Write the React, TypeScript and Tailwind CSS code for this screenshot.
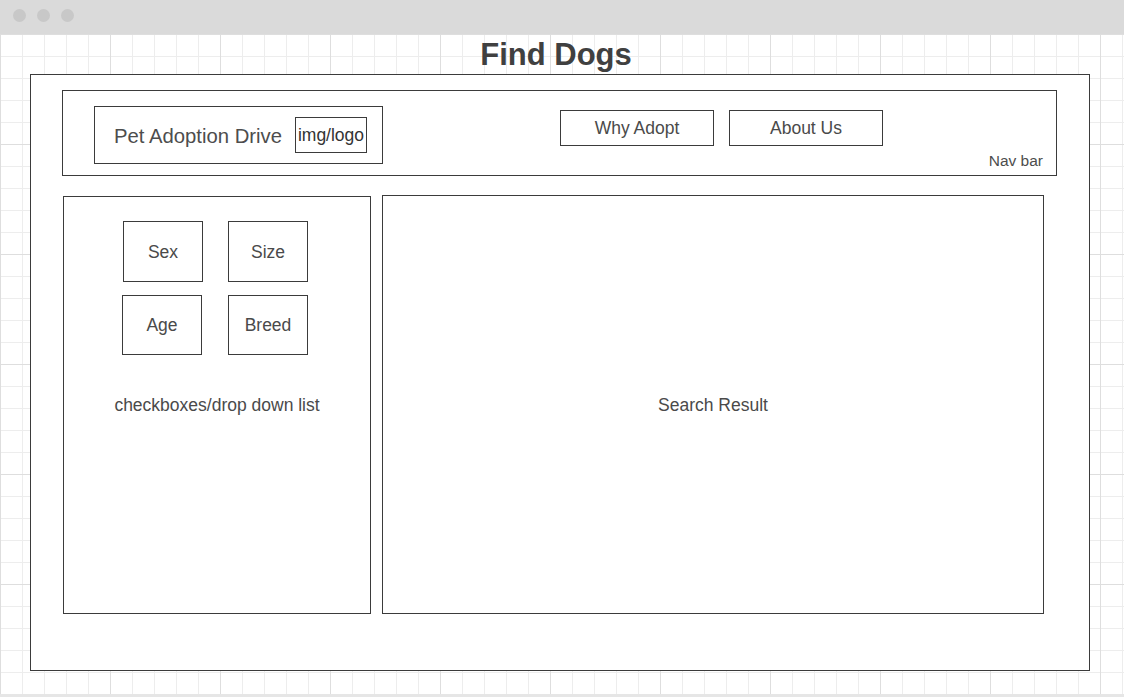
import React from "react";

const box = "border border-[#3b3b3b] bg-white";

function FilterBox({ label, w, h }: { label: string; w: string; h: string }) {
  return (
    <div className={`${box} ${w} ${h} flex items-center justify-center pt-[1px] text-[17.5px] text-[#4a4a4a]`}>
      {label}
    </div>
  );
}

export default function App() {
  return (
    <div
      className="w-[1124px] h-[697px] flex flex-col overflow-hidden bg-white"
      style={{ fontFamily: '"Liberation Sans", Arial, sans-serif' }}
    >
      {/* window title bar */}
      <div className="h-[34px] shrink-0 bg-[#dadada] flex items-start gap-[11px] pl-[13px] pt-[9px]">
        <div className="w-[13px] h-[13px] rounded-full bg-[#c8c8c8]" />
        <div className="w-[13px] h-[13px] rounded-full bg-[#c8c8c8]" />
        <div className="w-[13px] h-[13px] rounded-full bg-[#c8c8c8]" />
      </div>

      {/* grid canvas */}
      <div className="h-[660px] shrink-0 flex flex-col [background-image:linear-gradient(to_right,#dedede_1px,transparent_1px),linear-gradient(to_bottom,#dedede_1px,transparent_1px),linear-gradient(to_right,#ededed_1px,transparent_1px),linear-gradient(to_bottom,#ededed_1px,transparent_1px)] [background-size:110px_110px,110px_110px,22px_22px,22px_22px]">
        <div className="h-[40px] w-[1124px] pr-[12px] pt-[1px] flex items-center justify-center">
          <h1 className="text-[31px] leading-[40px] font-bold text-[#404040]">Find Dogs</h1>
        </div>

        <div className={`${box} ml-[30px] w-[1060px] h-[597px] flex flex-col`}>
          {/* nav bar */}
          <div className={`${box} ml-[31px] mt-[15px] w-[995px] h-[86px] flex items-start`}>
            <div className={`${box} ml-[31px] mt-[15px] w-[289px] h-[58px] flex items-center pl-[19px]`}>
              <span className="text-[20.3px] leading-[23px] pt-[2px] text-[#4d4d4d]">Pet Adoption Drive</span>
              <div className={`${box} ml-auto mr-[15px] w-[72px] h-[36px] flex items-center justify-center text-[17.5px] text-[#333333]`}>
                img/logo
              </div>
            </div>
            <div className="ml-[177px] mt-[19px] flex gap-[15px]">
              <div className={`${box} w-[154px] h-[36px] flex items-center justify-center pt-[1px] text-[17.5px] text-[#4a4a4a]`}>
                Why Adopt
              </div>
              <div className={`${box} w-[154px] h-[36px] flex items-center justify-center pt-[1px] text-[17.5px] text-[#4a4a4a]`}>
                About Us
              </div>
            </div>
            <span className="ml-auto self-end mb-[6px] mr-[13px] text-[15.5px] leading-[17px] text-[#4d4d4d]">Nav bar</span>
          </div>

          {/* panels */}
          <div className="mt-[19px] flex items-end">
            <div className={`${box} ml-[32px] w-[308px] h-[418px] flex flex-col`}>
              <div className="mt-[24px] ml-[58px] flex flex-col gap-[13px]">
                <div className="flex gap-[25px] pl-[1px]">
                  <FilterBox label="Sex" w="w-[80px]" h="h-[61px]" />
                  <FilterBox label="Size" w="w-[80px]" h="h-[61px]" />
                </div>
                <div className="flex gap-[26px]">
                  <FilterBox label="Age" w="w-[80px]" h="h-[60px]" />
                  <FilterBox label="Breed" w="w-[80px]" h="h-[60px]" />
                </div>
              </div>
              <div className="mt-[40px] text-center text-[17.5px] leading-[20px] text-[#4a4a4a]">
                checkboxes/drop down list
              </div>
            </div>
            <div className={`${box} ml-[11px] w-[662px] h-[419px] flex items-center justify-center pt-[1px] text-[17.5px] text-[#4a4a4a]`}>
              Search Result
            </div>
          </div>
        </div>
      </div>

      <div className="h-[3px] shrink-0 bg-[#e6e6e6]" />
    </div>
  );
}
